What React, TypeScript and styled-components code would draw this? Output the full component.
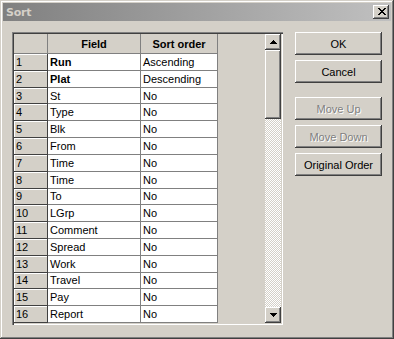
import React from "react";
import styled, { createGlobalStyle } from "styled-components";

const GlobalStyle = createGlobalStyle`
  html, body {
    margin: 0;
    padding: 0;
    background: #d4d0c8;
  }
  body {
    font-family: "Liberation Sans", Arial, sans-serif;
    font-size: 11px;
    color: #000;
  }
`;

type Row = { field: string; order: string; bold?: boolean };

const rows: Row[] = [
  { field: "Run", order: "Ascending", bold: true },
  { field: "Plat", order: "Descending", bold: true },
  { field: "St", order: "No" },
  { field: "Type", order: "No" },
  { field: "Blk", order: "No" },
  { field: "From", order: "No" },
  { field: "Time", order: "No" },
  { field: "Time", order: "No" },
  { field: "To", order: "No" },
  { field: "LGrp", order: "No" },
  { field: "Comment", order: "No" },
  { field: "Spread", order: "No" },
  { field: "Work", order: "No" },
  { field: "Travel", order: "No" },
  { field: "Pay", order: "No" },
  { field: "Report", order: "No" },
];

export default function App() {
  return (
    <>
      <GlobalStyle />
      <Window>
        <TitleBar>
          <Title>Sort</Title>
          <CloseButton aria-label="Close">
            <svg width="8" height="7" viewBox="0 0 8 7" shapeRendering="crispEdges">
              <path
                fill="#000"
                d="M0 0h2v1H0zM6 0h2v1H6zM1 1h2v1H1zM5 1h2v1H5zM2 2h4v1H2zM3 3h2v1H3zM2 4h4v1H2zM1 5h2v1H1zM5 5h2v1H5zM0 6h2v1H0zM6 6h2v1H6z"
              />
            </svg>
          </CloseButton>
        </TitleBar>

        <Body>
          <GridFrame>
            <Table>
              <Corner />
              <HeaderCell>Field</HeaderCell>
              <HeaderCell>Sort order</HeaderCell>
              <Spare />
              {rows.map((r, i) => (
                <React.Fragment key={i}>
                  <RowHead>{i + 1}</RowHead>
                  <DataCell $bold={r.bold}>{r.field}</DataCell>
                  <DataCell>{r.order}</DataCell>
                  <Spare />
                </React.Fragment>
              ))}
            </Table>
            <ScrollBar>
              <ScrollButton>
                <svg width="7" height="4" viewBox="0 0 7 4" shapeRendering="crispEdges">
                  <path fill="#000" d="M3 0h1v1H3zM2 1h3v1H2zM1 2h5v1H1zM0 3h7v1H0z" />
                </svg>
              </ScrollButton>
              <Thumb />
              <Track />
              <ScrollButton>
                <svg width="7" height="4" viewBox="0 0 7 4" shapeRendering="crispEdges">
                  <path fill="#000" d="M0 0h7v1H0zM1 1h5v1H1zM2 2h3v1H2zM3 3h1v1H3z" />
                </svg>
              </ScrollButton>
            </ScrollBar>
          </GridFrame>

          <ButtonColumn>
            <PushButton>OK</PushButton>
            <PushButton>Cancel</PushButton>
            <PushButton disabled $gapBefore>
              Move Up
            </PushButton>
            <PushButton disabled>Move Down</PushButton>
            <PushButton>Original Order</PushButton>
          </ButtonColumn>
        </Body>
      </Window>
    </>
  );
}

// STYLES

const Window = styled.div`
  width: 394px;
  height: 339px;
  box-sizing: border-box;
  padding: 3px;
  background: #d4d0c8;
  box-shadow: inset -1px -1px #404040, inset 1px 1px #d4d0c8,
    inset -2px -2px #808080, inset 2px 2px #ffffff;
  display: flex;
  flex-direction: column;
`;

const TitleBar = styled.div`
  height: 18px;
  flex: none;
  display: flex;
  align-items: center;
  padding: 0 2px 0 3px;
  background: linear-gradient(90deg, #808080 0%, #c0c0c0 100%);
`;

const Title = styled.span`
  font-family: "DejaVu Sans", Verdana, sans-serif;
  font-weight: bold;
  font-size: 11px;
  color: #d4d0c8;
  letter-spacing: -0.2px;
`;

const CloseButton = styled.div`
  margin-left: auto;
  width: 16px;
  height: 14px;
  box-sizing: border-box;
  display: flex;
  align-items: center;
  justify-content: center;
  padding: 0 0 1px 1px;
  background: #d4d0c8;
  box-shadow: inset -1px -1px #404040, inset 1px 1px #ffffff,
    inset -2px -2px #808080;
`;

const Body = styled.div`
  flex: 1;
  display: flex;
  align-items: flex-start;
  padding: 11px 9px 0 9px;
  gap: 12px;
`;

const GridFrame = styled.div`
  width: 271px;
  height: 293px;
  box-sizing: border-box;
  padding: 2px;
  display: flex;
  background: #d4d0c8;
  box-shadow: inset 1px 1px #808080, inset 2px 2px #404040,
    inset -1px -1px #ffffff, inset -2px -2px #d4d0c8;
`;

const Table = styled.div`
  flex: 1;
  display: grid;
  grid-template-columns: 34px 93px 77px 1fr;
  grid-template-rows: 20px repeat(16, 1fr);
  background: #d4d0c8;
  overflow: hidden;
`;

const Cell = styled.div`
  box-sizing: border-box;
  display: flex;
  align-items: center;
  white-space: nowrap;
  overflow: hidden;
`;

const Corner = styled(Cell)`
  border-right: 1px solid #808080;
  border-bottom: 1px solid #808080;
`;

const HeaderCell = styled(Cell)`
  justify-content: center;
  font-weight: bold;
  border-right: 1px solid #808080;
  border-bottom: 1px solid #808080;
`;

const Spare = styled.div`
  background: #d4d0c8;
`;

const RowHead = styled(Cell)`
  padding-left: 2px;
  border-right: 1px solid #404040;
  border-bottom: 1px solid #404040;
  box-shadow: inset 1px 1px #ffffff;
`;

const DataCell = styled(Cell)<{ $bold?: boolean }>`
  background: #ffffff;
  padding-left: 2px;
  font-weight: ${(p) => (p.$bold ? "bold" : "normal")};
  border-right: 1px solid #808080;
  border-bottom: 1px solid #808080;
`;

const ScrollBar = styled.div`
  width: 16px;
  flex: none;
  display: flex;
  flex-direction: column;
`;

const raised = `
  background: #d4d0c8;
  box-shadow: inset -1px -1px #404040, inset 1px 1px #ffffff,
    inset -2px -2px #808080, inset 2px 2px #d4d0c8;
`;

const ScrollButton = styled.div`
  width: 16px;
  height: 16px;
  flex: none;
  box-sizing: border-box;
  display: flex;
  align-items: center;
  justify-content: center;
  ${raised}
`;

const Thumb = styled.div`
  height: 69px;
  flex: none;
  ${raised}
`;

const Track = styled.div`
  flex: 1;
  background-color: #ffffff;
  background-image: conic-gradient(
    #d4d0c8 25%,
    #ffffff 0 50%,
    #d4d0c8 0 75%,
    #ffffff 0
  );
  background-size: 2px 2px;
`;

const ButtonColumn = styled.div`
  display: flex;
  flex-direction: column;
  gap: 5px;
`;

const PushButton = styled.button<{ $gapBefore?: boolean }>`
  width: 87px;
  height: 23px;
  margin: 0;
  margin-top: ${(p) => (p.$gapBefore ? "9px" : "0")};
  padding: 0;
  border: none;
  font-family: "Liberation Sans", Arial, sans-serif;
  font-size: 11px;
  color: #000;
  ${raised}
  box-shadow: inset -1px -1px #404040, inset 1px 1px #ffffff,
    inset -2px -2px #808080;

  &:disabled {
    color: #808080;
    text-shadow: 1px 1px #ffffff;
  }
`;
